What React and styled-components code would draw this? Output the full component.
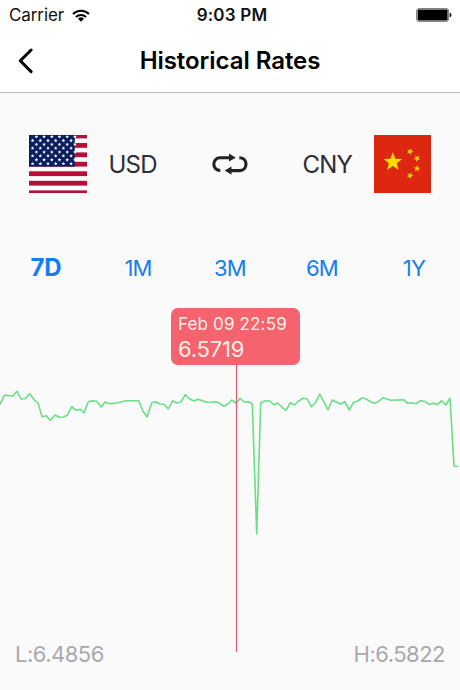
import React, { useState } from "react";
import styled, { createGlobalStyle } from "styled-components";

const GlobalStyle = createGlobalStyle`
  * {
    box-sizing: border-box;
  }

  body {
    margin: 0;
    background: #fafafa;
    font-family: Inter, "Liberation Sans", sans-serif;
  }
`;

const ranges = ["7D", "1M", "3M", "6M", "1Y"];

const rates = [
  [0, 404.3], [4.3, 395.3], [9.3, 395.5], [12.8, 396.3], [17, 391.3], [21, 399],
  [25, 398.7], [29.7, 393.7], [34.3, 400], [38, 403], [42, 416.7], [46.3, 415.7],
  [50.3, 420.4], [55, 415], [59.3, 417.3], [63.5, 417], [67.7, 414.7], [71.7, 406.7],
  [76, 410.3], [80.3, 409.3], [84, 413], [88.3, 401.7], [92.3, 400.7], [96.7, 401.3],
  [101.3, 407], [105, 402], [109.3, 403.7], [116.7, 403], [125.7, 400.7],
  [138.7, 400.7], [143, 411.3], [147, 417], [151.7, 402.7], [155.7, 401.7],
  [160, 404], [164, 404.3], [168.3, 409], [172.7, 400.7], [176.7, 403], [181, 402],
  [185.3, 394.7], [189.7, 399], [194, 401], [198.3, 399.3], [207.3, 402.5],
  [215.7, 401.7], [219.3, 403], [223.7, 406.3], [227.7, 404], [231.7, 400],
  [236.3, 403], [240, 398.3], [244.3, 402], [248.7, 401.7], [252.3, 404],
  [256.7, 534], [260.7, 402.7], [265, 401], [269.7, 401], [273.7, 404.7],
  [277.7, 403], [282, 407.3], [286, 410.3], [290.3, 402.7], [294.3, 405],
  [298.7, 401], [302.7, 398.3], [307.3, 399], [311.3, 406.7], [315.7, 402.3],
  [319.7, 394], [323.7, 401.7], [328, 409.7], [332.3, 400], [340.7, 404],
  [344.7, 401.7], [349.3, 410], [353.3, 402.7], [357.7, 401], [362, 398],
  [366.3, 399], [370.7, 402], [374.7, 403.3], [379, 401.3], [382.7, 397.7],
  [391, 400.3], [403.7, 399.7], [407.7, 403.3], [412, 402.7], [416.3, 403.7],
  [420.7, 400.7], [424.7, 401.3], [429.3, 404.3], [433.3, 403.3], [437.3, 404.7],
  [441.7, 400.7], [445.7, 405], [450, 398.3], [454, 466], [458.3, 466.5],
];

const starPoints = (cx, cy, r, turn = 0) =>
  Array.from({ length: 10 }, (_, i) => {
    const radius = i % 2 ? r * 0.42 : r;
    const angle = ((i * 36 - 90 + turn) * Math.PI) / 180;
    return `${(cx + radius * Math.cos(angle)).toFixed(2)},${(cy + radius * Math.sin(angle)).toFixed(2)}`;
  }).join(" ");

const UsFlag = () => (
  <Flag viewBox="0 0 57.5 58">
    <rect width="58" height="58" fill="#fff" />
    {[-1.4, 8, 17.4, 26.8, 36.3, 45.8, 55.4].map((y) => (
      <rect key={y} y={y} width="58" height="4.8" fill="#b50f3a" />
    ))}
    <rect width="45.8" height="31.6" fill="#0b1f60" />
    {Array.from({ length: 8 }, (_, row) =>
      Array.from({ length: 6 }, (_, col) => (
        <polygon
          key={`${row}-${col}`}
          points={starPoints(3.6 + col * 7.7 + (row % 2 ? 0 : 3.8), 1.7 + row * 3.85, 2)}
          fill="#fff"
        />
      ))
    )}
  </Flag>
);

const CnFlag = () => (
  <Flag viewBox="0 0 57.5 58">
    <rect width="58" height="58" fill="#dd2711" />
    <polygon points={starPoints(18.8, 27, 9.8)} fill="#ffde00" />
    <polygon points={starPoints(36, 16.6, 3.6, 22)} fill="#fdc90c" />
    <polygon points={starPoints(43, 23.4, 3.6, 45)} fill="#fdc90c" />
    <polygon points={starPoints(43, 33.6, 3.6, 5)} fill="#fdc90c" />
    <polygon points={starPoints(36, 40.6, 3.6, 22)} fill="#fdc90c" />
  </Flag>
);

const App = () => {
  const [range, setRange] = useState("7D");

  return (
    <Screen>
      <GlobalStyle />
      <StatusBar>
        <Carrier>
          Carrier
          <svg width="18" height="13" viewBox="0 0 18 13">
            <path d="M1 5.1a11.4 11.4 0 0 1 16 0" fill="none" stroke="#000" strokeWidth="2.1" />
            <path d="M3.9 8a7.3 7.3 0 0 1 10.2 0" fill="none" stroke="#000" strokeWidth="2" />
            <path d="M9 12.8 6 9.7a4.4 4.4 0 0 1 6 0Z" />
          </svg>
        </Carrier>
        <Time>9:03 PM</Time>
        <Battery viewBox="0 0 36 14">
          <rect x="0.6" y="0.6" width="32" height="12.8" rx="2.2" fill="#fff" stroke="#777" strokeWidth="1" />
          <rect x="1.6" y="1.6" width="30" height="10.8" rx="1" />
          <path d="M33.6 4.7c2.4.5 2.4 4.1 0 4.6Z" />
        </Battery>
      </StatusBar>

      <NavBar>
        <BackButton type="button" aria-label="Back">
          <svg width="16" height="26" viewBox="0 0 16 26">
            <path d="M13.1 2 2.3 12.8 13.1 23.6" fill="none" stroke="#000" strokeWidth="3" strokeLinecap="round" strokeLinejoin="round" />
          </svg>
        </BackButton>
        <Title>Historical Rates</Title>
      </NavBar>

      <PairRow>
        <Currency>
          <UsFlag />
          <Code>USD</Code>
        </Currency>
        <SwapButton type="button" aria-label="Swap currencies">
          <svg width="36" height="22" viewBox="0 0 36 22">
            <g fill="none" stroke="#222" strokeWidth="3.1">
              <path d="M8.3 17.5C4.2 17.5 1.8 14.6 1.8 11.2S4.3 4.7 8 4.7h9.5" />
              <path d="M27.3 4.7c4.2 0 6.7 2.9 6.7 6.4s-2.5 6.5-6.2 6.5H19" />
            </g>
            <path d="M17 .5 23.8 4.7 17 8.6ZM19.5 13.6 12.7 17.6 19.5 21.7Z" fill="#222" />
          </svg>
        </SwapButton>
        <Currency>
          <Code>CNY</Code>
          <CnFlag />
        </Currency>
      </PairRow>

      <Tabs>
        {ranges.map((item) => (
          <Tab key={item} type="button" $active={item === range} onClick={() => setRange(item)}>
            {item}
          </Tab>
        ))}
      </Tabs>

      <ChartArea>
        <Chart viewBox="0 300 460 390">
          <polyline
            points={rates.map((point) => point.join(",")).join(" ")}
            fill="none"
            stroke="#6bde86"
            strokeWidth="1.6"
            strokeLinejoin="round"
          />
          <line x1="236.5" y1="364" x2="236.5" y2="652" stroke="#e2606c" strokeWidth="1.3" />
        </Chart>
        <Tooltip>
          <TooltipDate>Feb 09 22:59</TooltipDate>
          <TooltipRate>6.5719</TooltipRate>
        </Tooltip>
        <Limits>
          <span>L:6.4856</span>
          <span>H:6.5822</span>
        </Limits>
      </ChartArea>
    </Screen>
  );
};

export default App;

const Screen = styled.div`
  display: flex;
  flex-direction: column;
  width: 460px;
  height: 690px;
  overflow: hidden;
  background: #fafafa;
`;

const StatusBar = styled.div`
  display: grid;
  grid-template-columns: 1fr auto 1fr;
  align-items: center;
  height: 30px;
  padding: 0 8px;
  background: #fff;
  color: #111;
`;

const Carrier = styled.div`
  display: flex;
  align-items: center;
  gap: 8px;
  padding-left: 1px;
  font-size: 17px;
  letter-spacing: -0.1px;
`;

const Time = styled.div`
  padding-left: 4px;
  font-size: 17px;
  font-weight: 600;
  letter-spacing: 0.2px;
`;

const Battery = styled.svg`
  width: 36px;
  height: 14px;
  justify-self: end;
`;

const NavBar = styled.div`
  display: grid;
  grid-template-columns: 60px 1fr 60px;
  align-items: center;
  height: 63px;
  padding-bottom: 1px;
  border-bottom: 1px solid #b9b9bb;
  background: #fff;
`;

const BackButton = styled.button`
  display: flex;
  padding: 0 0 0 18px;
  border: 0;
  background: none;
`;

const Title = styled.h1`
  margin: 0;
  font-size: 24px;
  font-weight: 600;
  text-align: center;
  letter-spacing: -0.05px;
`;

const PairRow = styled.div`
  display: flex;
  align-items: center;
  justify-content: space-between;
  height: 142px;
  padding: 0 28.5px 0 29px;
`;

const Currency = styled.div`
  display: flex;
  align-items: center;
  gap: 22px;
`;

const Flag = styled.svg`
  width: 57.5px;
  height: 58px;
`;

const Code = styled.span`
  color: #2d2d38;
  font-size: 24px;
  letter-spacing: -0.8px;
`;

const SwapButton = styled.button`
  display: flex;
  padding: 0;
  border: 0;
  background: none;
`;

const Tabs = styled.div`
  display: grid;
  grid-template-columns: repeat(5, 1fr);
  height: 65px;
`;

const Tab = styled.button`
  padding: 0;
  border: 0;
  background: none;
  color: #137df5;
  font-family: inherit;
  font-size: ${({ $active }) => ($active ? "24px" : "22px")};
  font-weight: ${({ $active }) => ($active ? 700 : 400)};
  letter-spacing: ${({ $active }) => ($active ? "-0.2px" : "-0.8px")};
`;

const ChartArea = styled.div`
  position: relative;
  display: flex;
  flex: 1;
`;

const Chart = styled.svg`
  width: 460px;
  height: 390px;
`;

/* floats over the line at the selected point */
const Tooltip = styled.div`
  position: absolute;
  top: 8px;
  left: 171px;
  width: 129px;
  height: 57px;
  padding: 5px 7px;
  border-radius: 7px;
  background: #f4636e;
  color: #fff0e6;
`;

const TooltipDate = styled.div`
  font-size: 17px;
  line-height: 23px;
  letter-spacing: 0.15px;
  white-space: nowrap;
`;

const TooltipRate = styled.div`
  font-size: 22px;
  line-height: 26px;
  letter-spacing: -0.2px;
`;

const Limits = styled.div`
  position: absolute;
  right: 15px;
  bottom: 22px;
  left: 15px;
  display: flex;
  justify-content: space-between;
  color: #a9a9ac;
  font-size: 22px;
  line-height: 27px;
  letter-spacing: -0.5px;
`;
